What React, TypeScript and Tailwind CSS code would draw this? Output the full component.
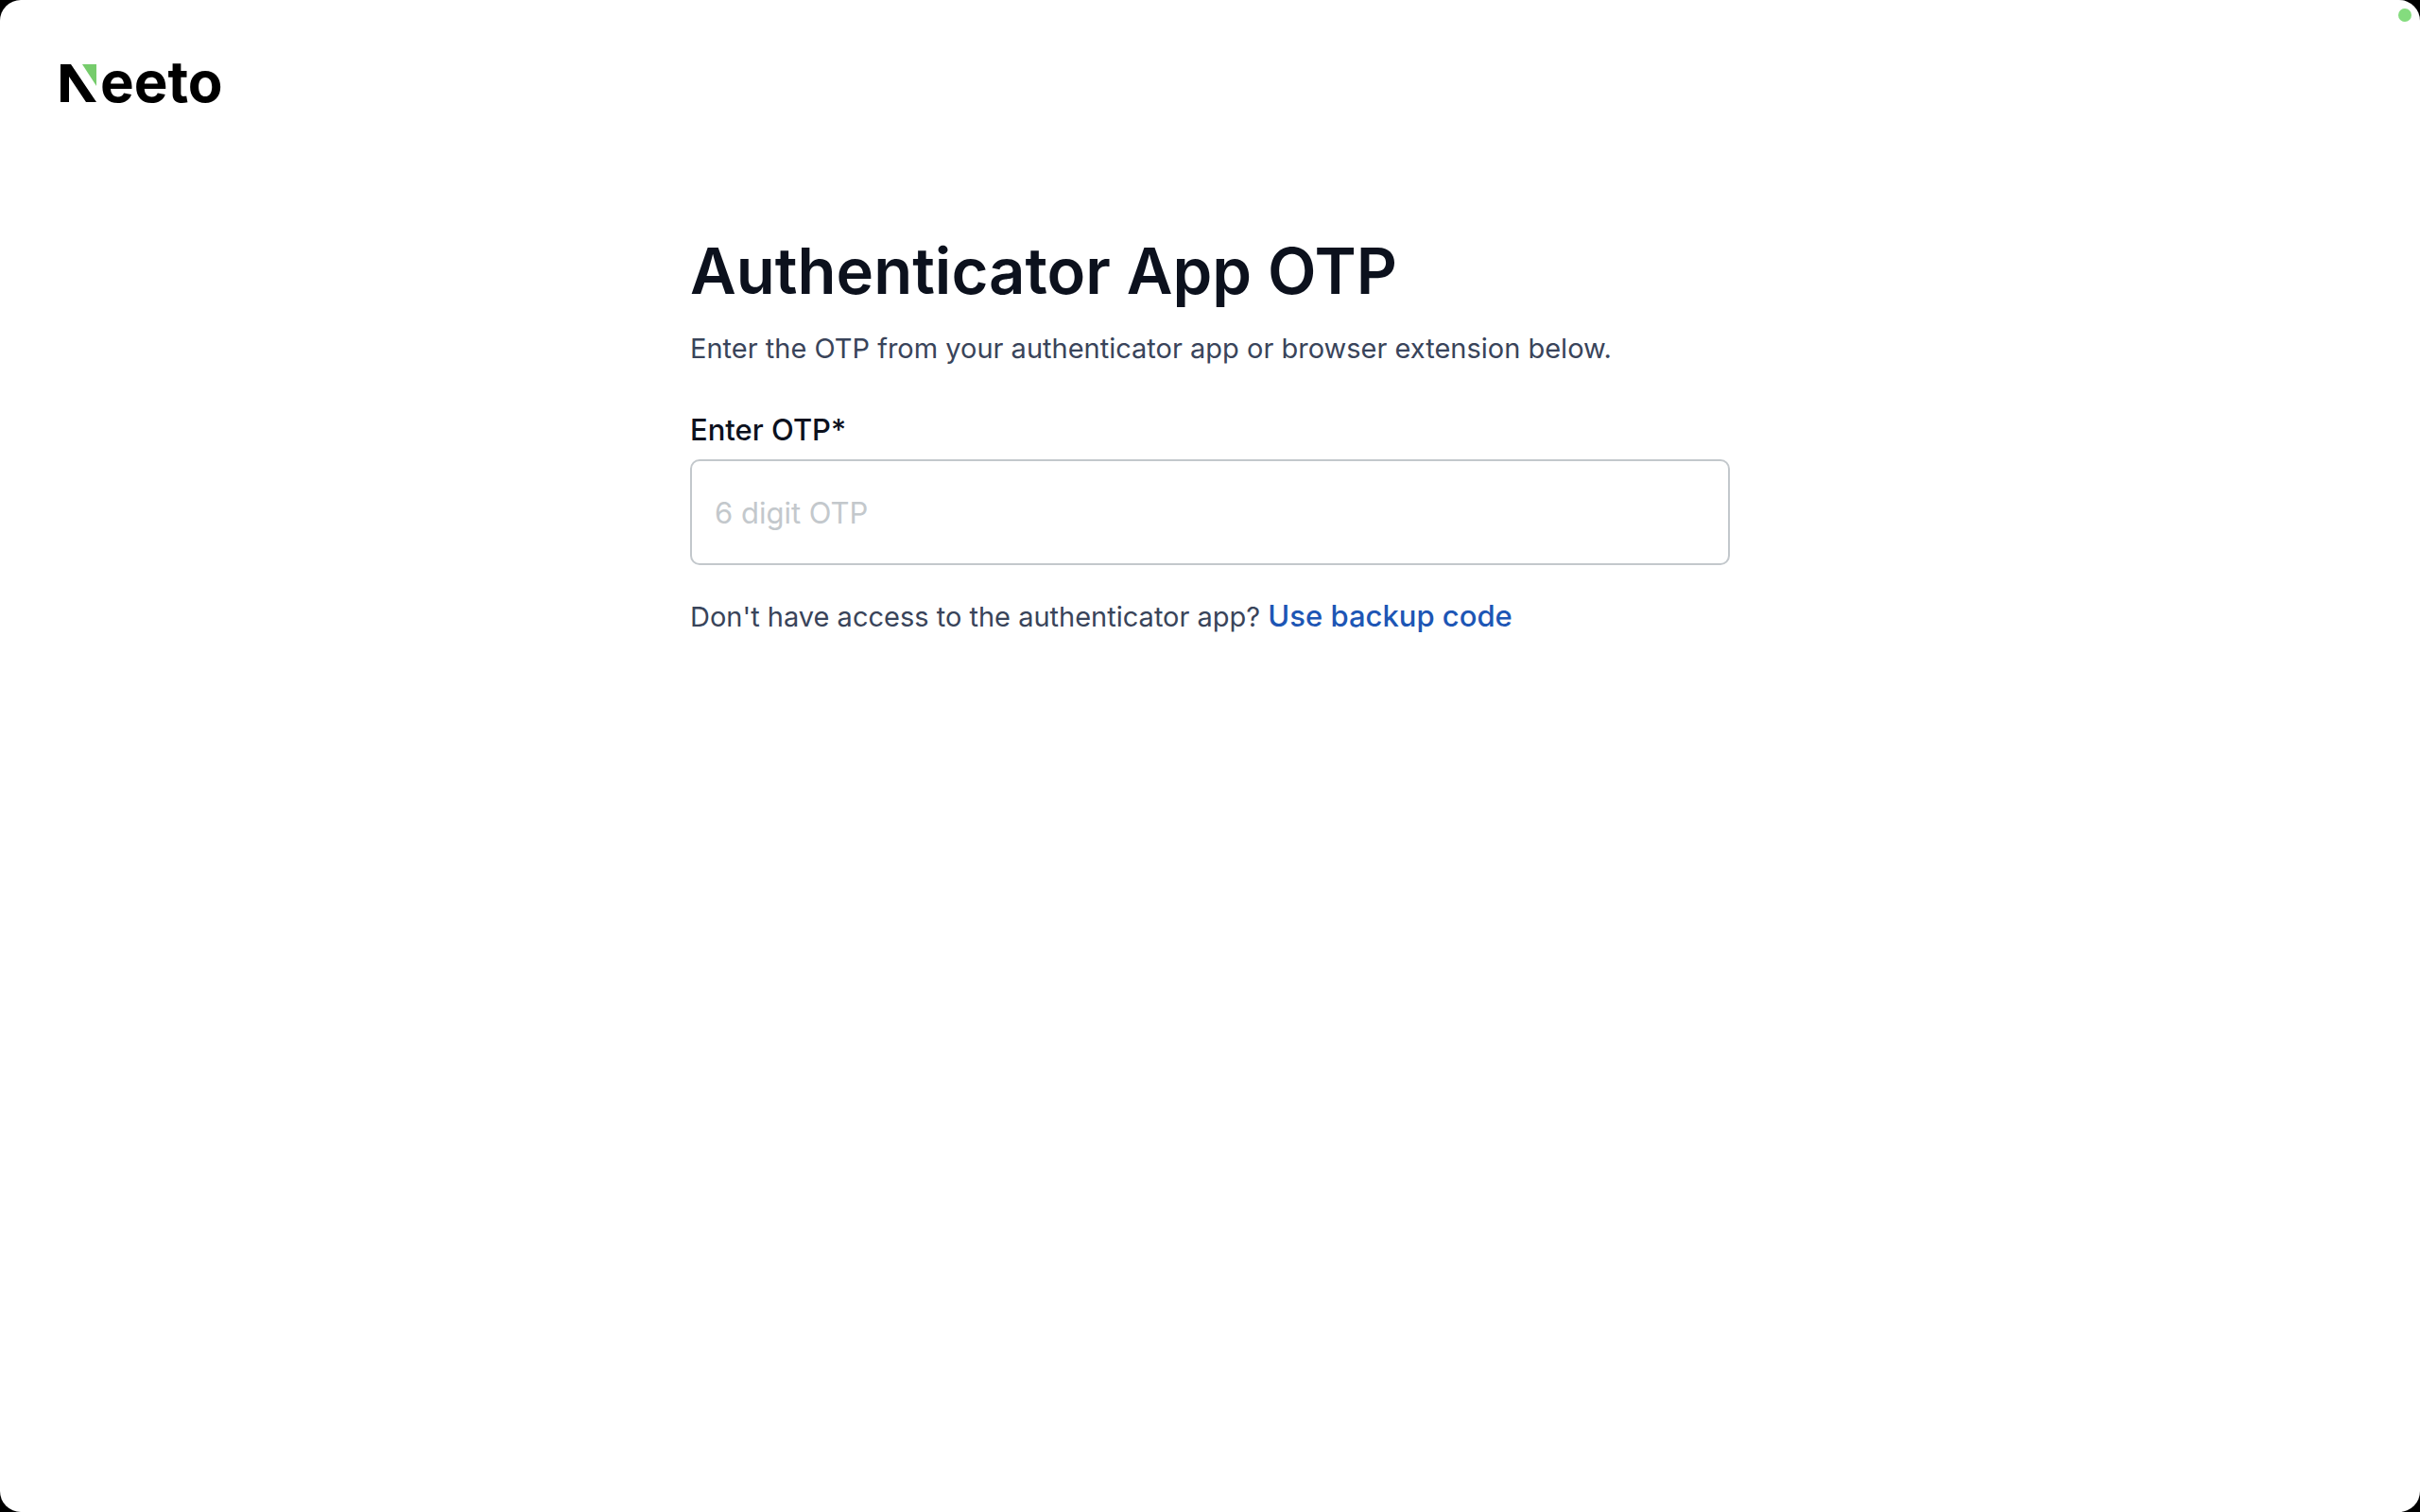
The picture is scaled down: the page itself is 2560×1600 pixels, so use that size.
import React, { useState } from 'react';

const NeetoLogo: React.FC = () => (
  <a href="#" aria-label="Neeto" className="flex items-baseline gap-1 text-black no-underline">
    <svg width="38" height="40" viewBox="0 0 38 40" aria-hidden="true">
      <path d="M0 0H11L38 40H27L9 13V40H0Z" fill="#000000" />
      <path d="M23 0H38V23Z" fill="#76cc6c" />
    </svg>
    <span className="text-[60px] leading-[40px] font-bold">eeto</span>
  </a>
);

const OtpForm: React.FC = () => {
  const [otp, setOtp] = useState('');

  return (
    <form onSubmit={(e) => e.preventDefault()} className="flex flex-col">
      <label htmlFor="otp" className="text-[31px] leading-[40px] font-medium text-[#0c111d]">
        Enter OTP*
      </label>
      <input
        id="otp"
        type="text"
        inputMode="numeric"
        maxLength={6}
        placeholder="6 digit OTP"
        value={otp}
        onChange={(e) => setOtp(e.target.value)}
        className="mt-[11px] h-28 w-full rounded-[10px] border-2 border-[#c3c8cc] bg-white px-6 text-[31px] text-[#0c111d] outline-none placeholder:text-[#c3c8cc] focus:border-[#1d56b5]"
      />
      <p className="mt-[34px] text-[29px] leading-[40px] text-[#39445a]">
        Don't have access to the authenticator app?{' '}
        <a href="#" className="text-[31px] font-medium text-[#1d56b5]">Use backup code</a>
      </p>
    </form>
  );
};

const App: React.FC = () => {
  return (
    <div className="min-h-screen bg-black flex font-['Inter',sans-serif]">
      <div className="relative grow rounded-[22px] bg-white">
        <span className="absolute top-[9px] right-[9px] size-[14px] rounded-full bg-[#84dc7e]"></span>
        <header className="flex px-16 pt-[66px]">
          <NeetoLogo />
        </header>
        <main className="mx-auto mt-[139px] w-full max-w-[1100px]">
          <h1 className="text-[67px] leading-[80px] font-semibold text-[#0c111d]">Authenticator App OTP</h1>
          <p className="mt-[22px] mb-[46px] text-[29px] leading-[40px] text-[#39445a]">
            Enter the OTP from your authenticator app or browser extension below.
          </p>
          <OtpForm />
        </main>
      </div>
    </div>
  );
};

export default App;
